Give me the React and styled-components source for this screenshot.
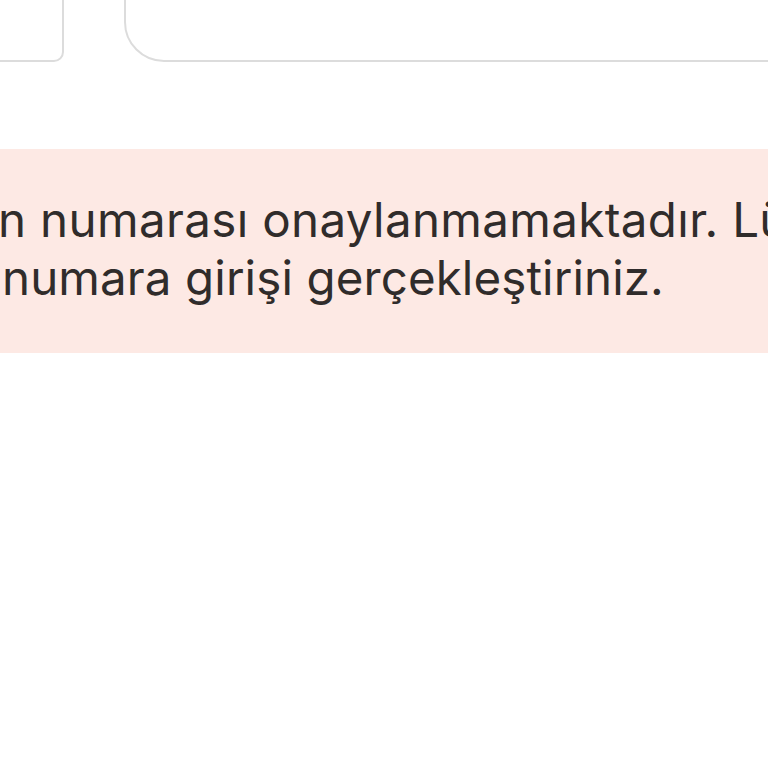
import React from "react";
import styled, { createGlobalStyle } from "styled-components";

const Global = createGlobalStyle`
  html, body { margin: 0; padding: 0; background: #ffffff; }
  body { overflow: hidden; width: 768px; height: 768px; }
`;

const Page = styled.div`
  width: 768px;
  height: 768px;
  overflow: hidden;
  background: #ffffff;
  font-family: Inter, "Noto Sans", "Liberation Sans", sans-serif;
`;

const FieldRow = styled.div`
  display: flex;
  gap: 60px;
  height: 104px;
  margin-top: -42px;
  margin-left: -40px;
`;

const Field = styled.div`
  box-sizing: border-box;
  flex: ${(p) => (p.$grow ? "1 0 auto" : "0 0 104px")};
  width: ${(p) => (p.$grow ? "auto" : "104px")};
  margin-right: ${(p) => (p.$grow ? "-60px" : "0")};
  height: 100%;
  border: 2px solid #dcdcdc;
  border-radius: ${(p) => p.$radius}px;
  background: #ffffff;
`;

const Alert = styled.div`
  margin-top: 87px;
  box-sizing: border-box;
  height: 204px;
  background: #fde9e4;
  padding: 42px 0 0 2px;
  overflow: hidden;
`;

const Line = styled.p`
  margin: 0 0 0 ${(p) => p.$shift || 0}px;
  font-size: 47.5px;
  line-height: 58px;
  color: #302c2b;
  white-space: nowrap;
  letter-spacing: ${(p) => p.$spacing || 0.1}px;
`;

export default function App() {
  return (
    <Page>
      <Global />
      <FieldRow>
        <Field $radius={10} />
        <Field $grow $radius={40} />
      </FieldRow>
      <Alert>
        <Line $shift={-4} $spacing={0.35}>n numarası onaylanmamaktadır. Lütfen</Line>
        <Line>numara girişi gerçekleştiriniz.</Line>
      </Alert>
    </Page>
  );
}
